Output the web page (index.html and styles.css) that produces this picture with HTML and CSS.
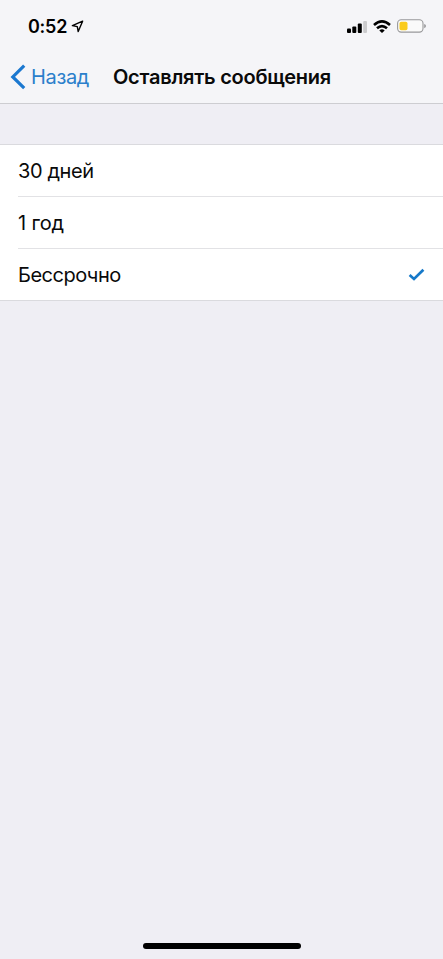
FILE: index.html
```html
<!DOCTYPE html>
<html lang="ru">
<head>
<meta charset="utf-8">
<title>Оставлять сообщения</title>
<link rel="stylesheet" href="styles.css">
</head>
<body>
<div class="screen">
  <header class="header">
    <div class="status">
      <span class="time">0:52</span>
      <svg class="location" width="13" height="13" viewBox="0 0 13 13"><path d="M11.6 1.2 1.4 5.6 6.3 6.6 7.2 11.5Z" fill="none" stroke="#000" stroke-width="1.4" stroke-linejoin="round"/></svg>
      <div class="indicators">
        <svg width="20" height="13" viewBox="0 0 20 13"><rect y="8.5" width="4" height="4.5" rx="1"/><rect x="5.3" y="6.5" width="4" height="6.5" rx="1"/><rect x="10.8" y="3.5" width="4" height="9.5" rx="1"/><rect x="16.2" y="1" width="3.8" height="12" rx="1" fill="#cbcbcd"/></svg>
        <svg width="18" height="13" viewBox="0 0 18 13"><g fill="none" stroke="#000" stroke-width="2.6"><path d="M1 5Q9-2.2 17 5"/><path d="M4 8.3Q9 3.8 14 8.3"/></g><path d="M6.3 10.4Q9 8.1 11.7 10.4L9 13Z"/></svg>
        <svg width="29" height="14" viewBox="0 0 29 14"><rect x=".6" y=".8" width="25.4" height="12.3" rx="3.6" fill="#fafafa" stroke="#98989a" stroke-width="1.1"/><rect x="2.5" y="2.7" width="8" height="8.5" rx="1.7" fill="#facb1b"/><path d="M27.2 4.9Q29 5.4 29 7T27.2 9.2Z" fill="#98989a"/></svg>
      </div>
    </div>
    <nav class="nav">
      <a class="back"><svg width="16" height="26" viewBox="0 0 16 26"><path d="M14.2 1.7 2.8 12.9 14.2 24.1" fill="none" stroke="#1b78d0" stroke-width="3.2"/></svg><span>Назад</span></a>
      <h1 class="title">Оставлять сообщения</h1>
    </nav>
  </header>
  <main class="content">
    <ul class="options">
      <li class="option">30 дней</li>
      <li class="option year">1 год</li>
      <li class="option forever">Бессрочно<svg width="17" height="14" viewBox="0 0 17 14"><path d="M1.6 7 6 11 15.4 1.8" fill="none" stroke="#1679c9" stroke-width="2.7"/></svg></li>
    </ul>
  </main>
  <footer class="footer"><div class="home"></div></footer>
</div>
</body>
</html>
```
FILE: styles.css
```css
* { box-sizing: border-box; }
body { margin: 0; font-family: Inter, "Liberation Sans", sans-serif; color: #0a0a0a; }
.screen { height: 959px; display: flex; flex-direction: column; background: #efeef4; }
.header { height: 104px; background: #f5f5f8; border-bottom: 1px solid #cdcdd1; }
.status { height: 52px; padding: 0 17px 0 28px; display: flex; align-items: center; }
.time { font-size: 18px; font-weight: 600; letter-spacing: -.25px; color: #000; }
.location { margin-left: 4px; }
.indicators { margin-left: auto; display: flex; align-items: center; gap: 6px; }
.nav { height: 50px; padding-left: 10px; display: flex; align-items: center; }
.back { width: 103px; display: flex; align-items: center; gap: 5px; color: #2b7fcb; font-size: 20px; letter-spacing: -.35px; }
.title { margin: 0; font-size: 20px; font-weight: 600; letter-spacing: -.25px; white-space: nowrap; }
.content { flex: 1; padding-top: 40px; }
.options { margin: 0; padding: 0 0 0 18px; list-style: none; background: #fff; border-top: 1px solid #dadade; border-bottom: 1px solid #dadade; }
.option { height: 51px; padding-right: 18px; display: flex; align-items: center; justify-content: space-between; font-size: 20px; letter-spacing: -.4px; }
.option + .option { height: 52px; border-top: 1px solid #e2e2e5; }
.option.year { letter-spacing: -.15px; }
.option.forever { letter-spacing: -.5px; }
.footer { height: 16px; display: flex; justify-content: center; }
.home { width: 158px; height: 6px; border-radius: 3px; background: #000; }
```
